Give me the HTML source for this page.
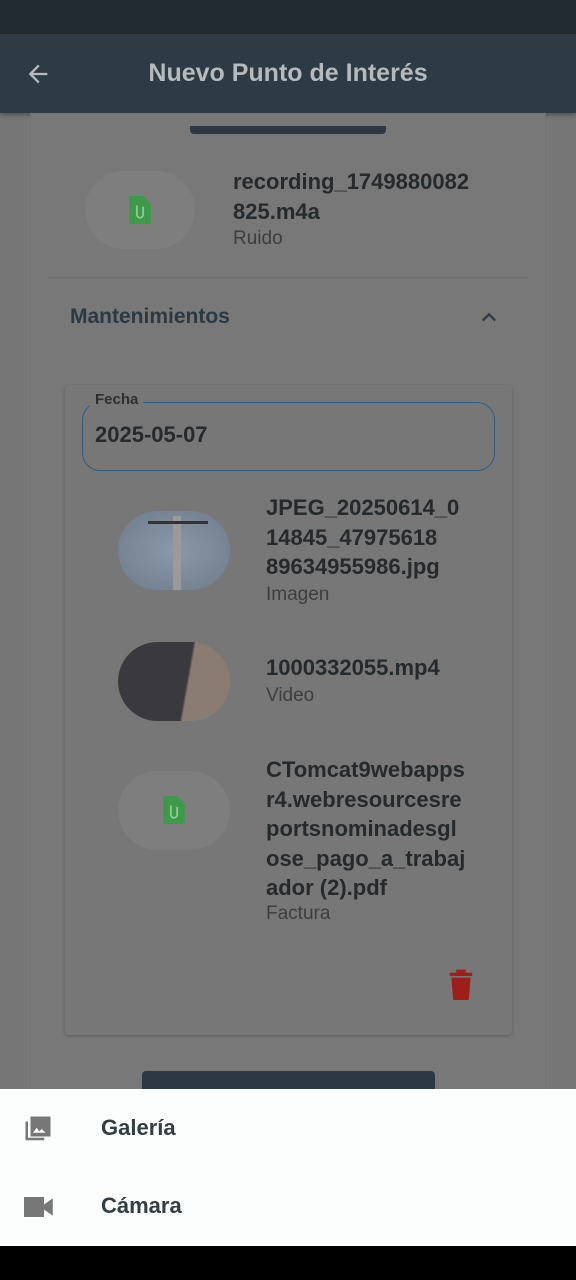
<!DOCTYPE html>
<html><head><meta charset="utf-8"><style>
*{margin:0;padding:0;box-sizing:border-box}
body{width:576px;height:1280px;position:relative;overflow:hidden;background:#767676;font-family:"Liberation Sans",sans-serif;color:#2b2b2b}
.a{position:absolute}
.b{font-weight:bold;font-size:22px;line-height:29.5px;color:#262a2c}
.s{font-size:19px;color:#3e3e3e}
.pill{background:#7e7e7e;border-radius:40px}
</style></head><body>
<div class="a" style="left:0;top:0;width:576px;height:34px;background:#222a31"></div>
<div class="a" style="left:0;top:34px;width:576px;height:79px;background:#2e3a44;box-shadow:0 2px 4px rgba(0,0,0,.3)"></div>
<svg class="a" style="left:24px;top:60px" width="28" height="28" viewBox="0 0 24 24"><path d="M20 11H7.8l5.6-5.6L12 4l-8 8 8 8 1.4-1.4L7.8 13H20z" fill="#b6babd"/></svg>
<div class="a" style="left:0;width:576px;top:59px;text-align:center;font-weight:bold;font-size:25px;color:#b6babd">Nuevo Punto de Interés</div>
<div class="a" style="left:30px;top:113px;width:516px;height:980px;background:#787878;border-left:1px solid #727272;border-right:1px solid #727272"></div>
<div class="a" style="left:190px;top:126px;width:196px;height:8px;background:#2c3843;border-radius:0 0 4px 4px"></div>
<div class="a pill" style="left:85px;top:171px;width:110px;height:78px"></div>
<svg class="a" style="left:128px;top:196px" width="24" height="28" viewBox="0 0 14 18"><path d="M0 1a1 1 0 0 1 1-1h8l5 5v12a1 1 0 0 1-1 1H1a1 1 0 0 1-1-1z" fill="#3e9a48"/><path d="M5 6v6a2 2 0 0 0 4 0V7" stroke="#8fc896" stroke-width="1.2" fill="none"/></svg>
<div class="a b" style="left:233px;top:167px">recording_1749880082<br>825.m4a</div>
<div class="a s" style="left:233px;top:228px">Ruido</div>
<div class="a" style="left:48px;top:277px;width:480px;height:1px;background:#707070"></div>
<div class="a" style="left:70px;top:305px;font-weight:bold;font-size:21px;color:#2c3943">Mantenimientos</div>
<svg class="a" style="left:478px;top:308px" width="22" height="18" viewBox="0 0 24 20"><path d="M5 14l7-7 7 7" stroke="#2c3943" stroke-width="2.5" fill="none"/></svg>
<div class="a" style="left:65px;top:385px;width:447px;height:650px;background:#777;border-radius:4px;box-shadow:0 1px 3px rgba(0,0,0,.25)"></div>
<div class="a" style="left:82px;top:402px;width:413px;height:69px;border:1.5px solid #2f5d82;border-radius:18px"></div>
<div class="a" style="left:90px;top:391px;padding:0 5px;background:#777;font-weight:bold;font-size:15px;color:#2f2f2f">Fecha</div>
<div class="a" style="left:95px;top:422px;font-weight:bold;font-size:22px;color:#262a2c">2025-05-07</div>
<div class="a" style="left:118px;top:511px;width:112px;height:79px;border-radius:40px;background:radial-gradient(#8a98a8,#6e7b8a);overflow:hidden"><div class="a" style="left:55px;top:5px;width:8px;height:75px;background:#9a9a98"></div><div class="a" style="left:30px;top:10px;width:60px;height:3px;background:#333"></div></div>
<div class="a b" style="left:266px;top:493px">JPEG_20250614_0<br>14845_47975618<br>89634955986.jpg</div>
<div class="a s" style="left:266px;top:584px">Imagen</div>
<div class="a" style="left:118px;top:642px;width:112px;height:79px;border-radius:40px;background:linear-gradient(100deg,#3a3a3e 0 60%,#8a7c70 62%);"></div>
<div class="a b" style="left:266px;top:653px">1000332055.mp4</div>
<div class="a s" style="left:266px;top:685px">Video</div>
<div class="a pill" style="left:118px;top:771px;width:112px;height:79px"></div>
<svg class="a" style="left:162px;top:796px" width="24" height="28" viewBox="0 0 14 18"><path d="M0 1a1 1 0 0 1 1-1h8l5 5v12a1 1 0 0 1-1 1H1a1 1 0 0 1-1-1z" fill="#3e9a48"/><path d="M5 6v6a2 2 0 0 0 4 0V7" stroke="#8fc896" stroke-width="1.2" fill="none"/></svg>
<div class="a b" style="left:266px;top:755px">CTomcat9webapps<br>r4.webresourcesre<br>portsnominadesgl<br>ose_pago_a_trabaj<br>ador (2).pdf</div>
<div class="a s" style="left:266px;top:903px">Factura</div>
<svg class="a" style="left:448px;top:968px" width="26" height="32" viewBox="0 0 16 20"><path d="M1 3h14v2H1zM5 1h6v2H5zM2 6h12l-1 13a1 1 0 0 1-1 1H4a1 1 0 0 1-1-1z" fill="#9c2019"/></svg>
<div class="a" style="left:142px;top:1071px;width:293px;height:30px;background:#2c3843;border-radius:4px"></div>
<div class="a" style="left:0;top:1089px;width:576px;height:157px;background:#fcfefe"></div>
<svg class="a" style="left:23px;top:1114px" width="30" height="30" viewBox="0 0 24 24"><path d="M2 6v15h15v-2H4V6z" fill="#777"/><path d="M6 2h16v16H6z" fill="#777"/><path d="M8 15l3-4 2 3 2-2 3 3z" fill="#fff"/></svg>
<div class="a" style="left:101px;top:1115px;font-weight:bold;font-size:22px;color:#343d42">Galería</div>
<svg class="a" style="left:24px;top:1195px" width="30" height="24" viewBox="0 0 24 18"><path d="M0 1h16v16H0zM16 7l7-5v14l-7-5z" fill="#777"/></svg>
<div class="a" style="left:101px;top:1193px;font-weight:bold;font-size:22px;color:#343d42">Cámara</div>
<div class="a" style="left:0;top:1246px;width:576px;height:34px;background:#000"></div>
</body></html>
